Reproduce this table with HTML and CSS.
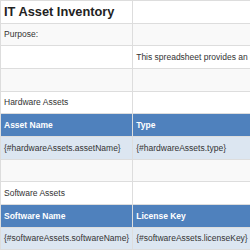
FILE: index.html
```html
<!DOCTYPE html>
<html>
<head>
<meta charset="utf-8">
<link rel="stylesheet" href="styles.css">
</head>
<body>
<table class="sheet">
  <colgroup><col class="c1"><col class="c2"></colgroup>
  <tr class="title-row"><td class="title">IT Asset Inventory</td><td></td></tr>
  <tr class="alt"><td>Purpose:</td><td></td></tr>
  <tr><td></td><td>This spreadsheet provides an overview of all IT assets</td></tr>
  <tr class="alt"><td></td><td></td></tr>
  <tr><td>Hardware Assets</td><td></td></tr>
  <tr class="head"><td>Asset Name</td><td>Type</td></tr>
  <tr class="data"><td>{#hardwareAssets.assetName}</td><td>{#hardwareAssets.type}</td></tr>
  <tr class="alt"><td></td><td></td></tr>
  <tr><td>Software Assets</td><td></td></tr>
  <tr class="head"><td>Software Name</td><td>License Key</td></tr>
  <tr class="data"><td>{#softwareAssets.softwareName}</td><td>{#softwareAssets.licenseKey}</td></tr>
</table>
</body>
</html>
```
FILE: styles.css
```css
html, body {
  margin: 0;
  padding: 0;
  background: #ffffff;
  overflow: hidden;
}
.sheet {
  border-collapse: collapse;
  font-family: "Liberation Sans", Arial, sans-serif;
  font-size: 8.5px;
  color: #333333;
  white-space: nowrap;
}
.c1 { width: 132px; }
.c2 { width: 250px; }
.sheet td {
  border: 1px solid #dddddd;
  padding: 0 3px;
  height: 21.67px;
  line-height: 10px;
  vertical-align: middle;
  text-align: left;
}
.sheet .title {
  font-size: 12.8px;
  font-weight: bold;
  color: #222222;
}
.alt td { background: #f9f9f9; }
.head td {
  background: #4f81bd;
  color: #ffffff;
  font-weight: bold;
}
.data td { background: #dce6f1; }
```
